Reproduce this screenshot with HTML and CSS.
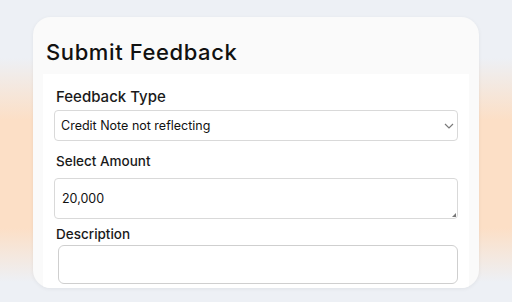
FILE: index.html
```html
<!DOCTYPE html>
<html>
<head>
<meta charset="utf-8">
<link rel="stylesheet" href="styles.css">
</head>
<body>
<div class="card">
  <h2 class="title">Submit Feedback</h2>
  <div class="panel">
    <label class="label label-lg">Feedback Type</label>
    <div class="select">
      <span>Credit Note not reflecting</span>
      <svg class="chev" width="10" height="6" viewBox="0 0 10 6"><path d="M1 1 L5 5 L9 1" fill="none" stroke="#7a7a7a" stroke-width="1.2"/></svg>
    </div>
    <label class="label">Select Amount</label>
    <div class="amount">
      <span>20,000</span>
      <svg class="grip" width="4" height="4" viewBox="0 0 4 4"><path d="M4 0 L4 4 L0 4 Z" fill="#777"/></svg>
    </div>
    <label class="label">Description</label>
    <div class="desc"></div>
  </div>
</div>
</body>
</html>
```

FILE: styles.css
```css
html, body {
  margin: 0;
  padding: 0;
}
body {
  width: 512px;
  height: 302px;
  overflow: hidden;
  font-family: Inter, "Noto Sans", sans-serif;
  color: #111;
  background: linear-gradient(to bottom,
    #edf0f5 0px, #edf0f5 58px,
    #fcdfc6 120px, #fcdfc6 228px,
    #edf0f5 282px, #edf0f5 302px);
}
.card {
  margin: 17px 0 0 33px;
  width: 446px;
  height: 271px;
  box-sizing: border-box;
  background: #fafafa;
  border-radius: 18px;
  overflow: hidden;
  padding: 0 10px;
  box-shadow: 0 1px 4px rgba(0,0,0,0.06);
}
.title {
  margin: 0;
  padding: 20px 0 0 3px;
  height: 37px;
  font-size: 22px;
  line-height: 30px;
  font-weight: 500;
  letter-spacing: 0.6px;
  color: #111;
}
.panel {
  background: #fff;
  height: 214px;
  padding: 12px 11px 0 11px;
  display: flex;
  flex-direction: column;
}
.label {
  display: block;
  padding-left: 2px;
  font-size: 13.5px;
  line-height: 20px;
  font-weight: 500;
  color: #1a1a1a;
}
.label-lg {
  font-size: 15px;
  line-height: 22px;
  margin-bottom: 2px;
}
.select {
  height: 31px;
  box-sizing: border-box;
  border: 1px solid #d9d9d9;
  border-radius: 4px;
  display: flex;
  align-items: center;
  justify-content: space-between;
  padding: 0 3px 0 6px;
  font-size: 12.5px;
  margin-bottom: 10px;
}
.amount {
  position: relative;
  height: 41px;
  box-sizing: border-box;
  border: 1px solid #d9d9d9;
  border-radius: 4px;
  margin-top: 7px;
  padding: 0 7px;
  display: flex;
  align-items: center;
  font-size: 12.5px;
  margin-bottom: 5px;
}
.grip {
  position: absolute;
  right: 1px;
  bottom: 1px;
}
.desc {
  margin: 1px 0 0 4px;
  height: 39px;
  box-sizing: border-box;
  border: 1px solid #cfcfcf;
  border-radius: 6px;
}
```
